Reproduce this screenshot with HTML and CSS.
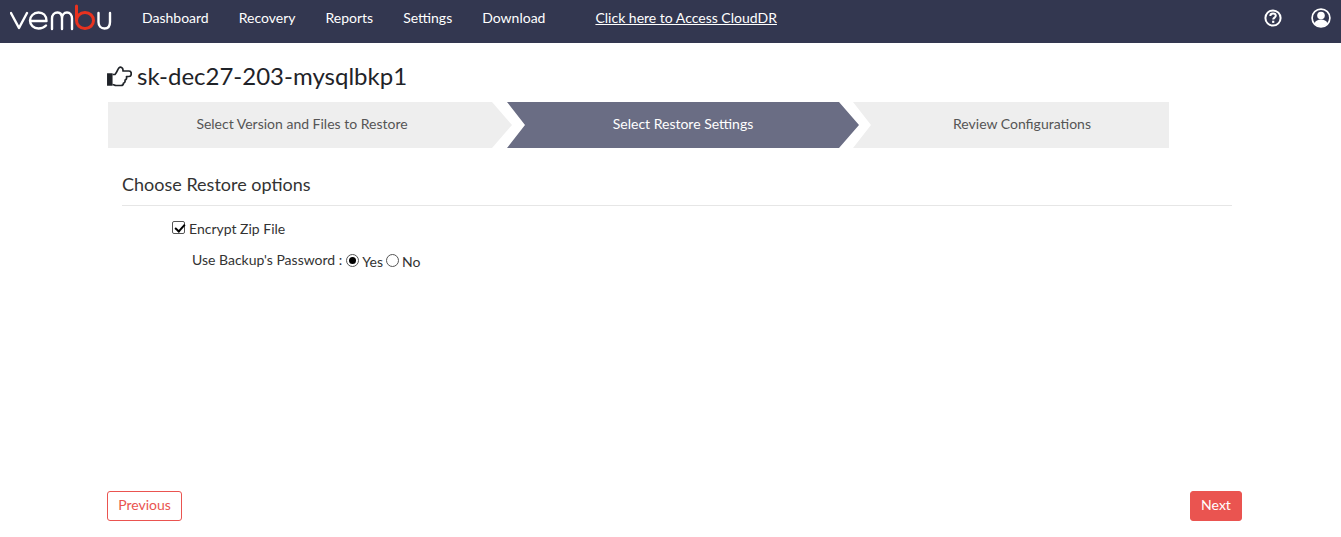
FILE: index.html
```html
<!DOCTYPE html>
<html lang="en">
<head>
<meta charset="utf-8">
<title>Restore</title>
<link rel="stylesheet" href="styles.css">
</head>
<body>
<header class="topbar">
  <svg class="logo" width="102" height="28" viewBox="0 0 102 28" fill="none" stroke-linecap="round" stroke-linejoin="round" role="img" aria-label="vembu">
    <path class="logo-w" d="M1 9 L9 24 L17 9"/>
    <path class="logo-w" d="M20.500 17 H36.500 C36.500 11.500 33 8.500 28.500 8.500 C23.500 8.500 20 12.500 20 16.500 C20 21 23.500 24.500 28.500 24.500 C31.500 24.500 34 23.500 36 21.500"/>
    <path class="logo-w" d="M42 25 V14.500 C42 11 44.500 8.500 47.500 8.500 C50.500 8.500 52 11 52 14.500 V25 M52 14.500 C52 11 54 8.500 57 8.500 C60 8.500 62 11 62 14.500 V25"/>
    <path class="logo-r" d="M66.500 2 V16.500 C66.500 21 70 24.500 75 24.500 C80 24.500 83.500 21 83.500 16.500 C83.500 12 80 8.500 75 8.500 C70 8.500 66.500 12 66.500 16.500"/>
    <path class="logo-w" d="M88.500 9 V18 C88.500 22 91 24.500 94.500 24.500 C98 24.500 100 22 100 18 V9"/>
  </svg>
  <nav class="nav">
    <a class="nav-link" href="#">Dashboard</a>
    <a class="nav-link" href="#">Recovery</a>
    <a class="nav-link" href="#">Reports</a>
    <a class="nav-link" href="#">Settings</a>
    <a class="nav-link" href="#">Download</a>
  </nav>
  <a class="cloud-link" href="#">Click here to Access CloudDR</a>
  <div class="top-icons">
    <svg width="18" height="18" viewBox="0 0 18 18" fill="none" role="img" aria-label="Help">
      <circle cx="9" cy="9" r="7.600" stroke="#fff" stroke-width="2"/>
      <path d="M6.300 7 C6.300 5.300 7.500 4.400 9 4.400 C10.600 4.400 11.800 5.300 11.800 6.800 C11.800 8.600 9.200 8.600 9.200 10.600" stroke="#fff" stroke-width="2"/>
      <rect x="8.100" y="11.700" width="2.200" height="2.200" fill="#fff"/>
    </svg>
    <svg width="20" height="20" viewBox="0 0 20 20" fill="none" role="img" aria-label="Account">
      <circle cx="10" cy="10" r="8.900" stroke="#fff" stroke-width="1.700"/>
      <circle cx="10" cy="7.500" r="3.800" fill="#fff"/>
      <path d="M3.500 15.500 C4.500 12.500 7 11.500 10 11.500 C13 11.500 15.500 12.500 16.500 15.500 C15 17.500 12.500 18.500 10 18.500 C7.500 18.500 5 17.500 3.500 15.500 Z" fill="#fff"/>
    </svg>
  </div>
</header>
<main class="page">
  <h1 class="title">
    <svg class="thumb" width="25" height="22" viewBox="0 0 25 22" fill="none" role="img" aria-label="Hand pointing right">
      <rect x="0.800" y="8" width="4" height="11" fill="#1f2328" stroke="#1f2328" stroke-width="1.500"/>
      <path d="M5.500 8.500 H8 C10 6.500 10.500 3.500 12 1.800 C13.500 0.500 16 1.500 16 4 V5 H22 C25 5 25 10.500 22 10.500 H19.500 C20 12.500 19 14 18 14 C18.500 15.500 17.500 17 16.500 17 C16.500 18.500 15.500 19.500 14 19.500 H9 C7.500 19.500 7 18.500 5.500 18.500" stroke="#1f2328" stroke-width="1.700" stroke-linejoin="round"/>
    </svg>
    <span>sk-dec27-203-mysqlbkp1</span>
  </h1>
  <ol class="steps">
    <li class="step step-first">Select Version and Files to Restore</li>
    <li class="step step-active">Select Restore Settings</li>
    <li class="step step-last">Review Configurations</li>
  </ol>
  <section class="options">
    <h2 class="options-title">Choose Restore options</h2>
    <label class="check-row"><input class="check" type="checkbox" checked>Encrypt Zip File</label>
    <div class="radio-row">
      <span class="radio-label">Use Backup's Password :</span>
      <label class="radio-opt"><input class="radio" type="radio" name="pw" checked>Yes</label>
      <label class="radio-opt"><input class="radio" type="radio" name="pw">No</label>
    </div>
  </section>
  <footer class="actions">
    <button class="btn btn-outline" type="button">Previous</button>
    <button class="btn btn-solid" type="button">Next</button>
  </footer>
</main>
</body>
</html>
```
FILE: styles.css
```css
* { box-sizing: border-box; }
html, body { margin: 0; height: 100%; }
body { font-family: Lato, "Open Sans", sans-serif; color: #333; background: #fff; font-size: 14px; overflow: hidden; }
.topbar { height: 43px; background: #333750; display: flex; align-items: center; padding: 0 10px 8px 10px; }
.logo { flex: none; }
.logo-w { stroke: #fff; stroke-width: 2.400; }
.logo-r { stroke: #e8321f; stroke-width: 3; }
.nav { display: flex; gap: 30px; margin-left: 30px; }
.nav-link { color: #fff; text-decoration: none; font-size: 14px; }
.cloud-link { color: #fff; font-size: 14px; text-decoration: underline; margin-left: 50px; }
.top-icons { margin-left: auto; display: flex; align-items: center; gap: 29px; }
.page { width: 1135px; margin-left: 107px; height: 494px; display: flex; flex-direction: column; }
.title { display: flex; align-items: center; gap: 5px; margin: 18px 0 2px; font-size: 24px; font-weight: 400; line-height: 29px; color: #1f2328; height: 29px; }
.thumb { flex: none; margin-top: 2px; }
.steps { list-style: none; display: flex; margin: 10px 0 0 1px; padding: 0; height: 46px; }
.step { display: flex; align-items: center; justify-content: center; font-size: 14px; background: #eee; color: #555; padding-bottom: 4px; }
.step-first { width: 404px; padding-right: 16px; clip-path: polygon(0 0, 384px 0, 100% 50%, 384px 100%, 0 100%); }
.step-active { width: 352px; margin-left: -5px; background: #6a6d84; color: #fff; clip-path: polygon(0 0, 332px 0, 100% 50%, 332px 100%, 0 100%, 18px 50%); }
.step-last { width: 316px; margin-left: -6px; padding-left: 22px; clip-path: polygon(0 0, 100% 0, 100% 100%, 0 100%, 18px 50%); }
.options { margin-left: 15px; width: 1110px; }
.options-title { margin: 25px 0 0; font-size: 18px; font-weight: 400; line-height: 22px; color: #333; padding-bottom: 10px; border-bottom: 1px solid #e6e6e6; }
.check-row { display: flex; align-items: center; margin: 14px 0 0 50px; line-height: 17px; }
.check { appearance: none; position: relative; margin: -2px 4px 0 0; width: 13px; height: 13px; border: 1px solid #555; border-radius: 2px; background: #fff; }
.check:checked::after { content: ""; position: absolute; left: 3.500px; top: 0; width: 4px; height: 8px; border: solid #000; border-width: 0 2px 2px 0; transform: rotate(42deg); }
.radio-row { display: flex; align-items: flex-start; margin: 14px 0 0 70px; line-height: 17px; }
.radio-label { margin-right: 4px; }
.radio-opt { display: flex; align-items: center; margin-right: 3px; padding-top: 2px; }
.radio { appearance: none; position: relative; margin: -3px 3px 0 0; width: 13px; height: 13px; border: 1px solid #555; border-radius: 50%; background: #fff; }
.radio:checked::after { content: ""; position: absolute; left: 2px; top: 2px; width: 7px; height: 7px; border-radius: 50%; background: #000; }
.actions { margin-top: auto; margin-bottom: 16px; display: flex; justify-content: space-between; }
.btn { font-family: inherit; font-size: 14px; height: 30px; padding: 0 0 4px; border-radius: 3px; border: 1px solid #ea5450; }
.btn-outline { width: 75px; background: #fff; color: #ea5450; }
.btn-solid { width: 52px; background: #ea5450; color: #fff; }
```
